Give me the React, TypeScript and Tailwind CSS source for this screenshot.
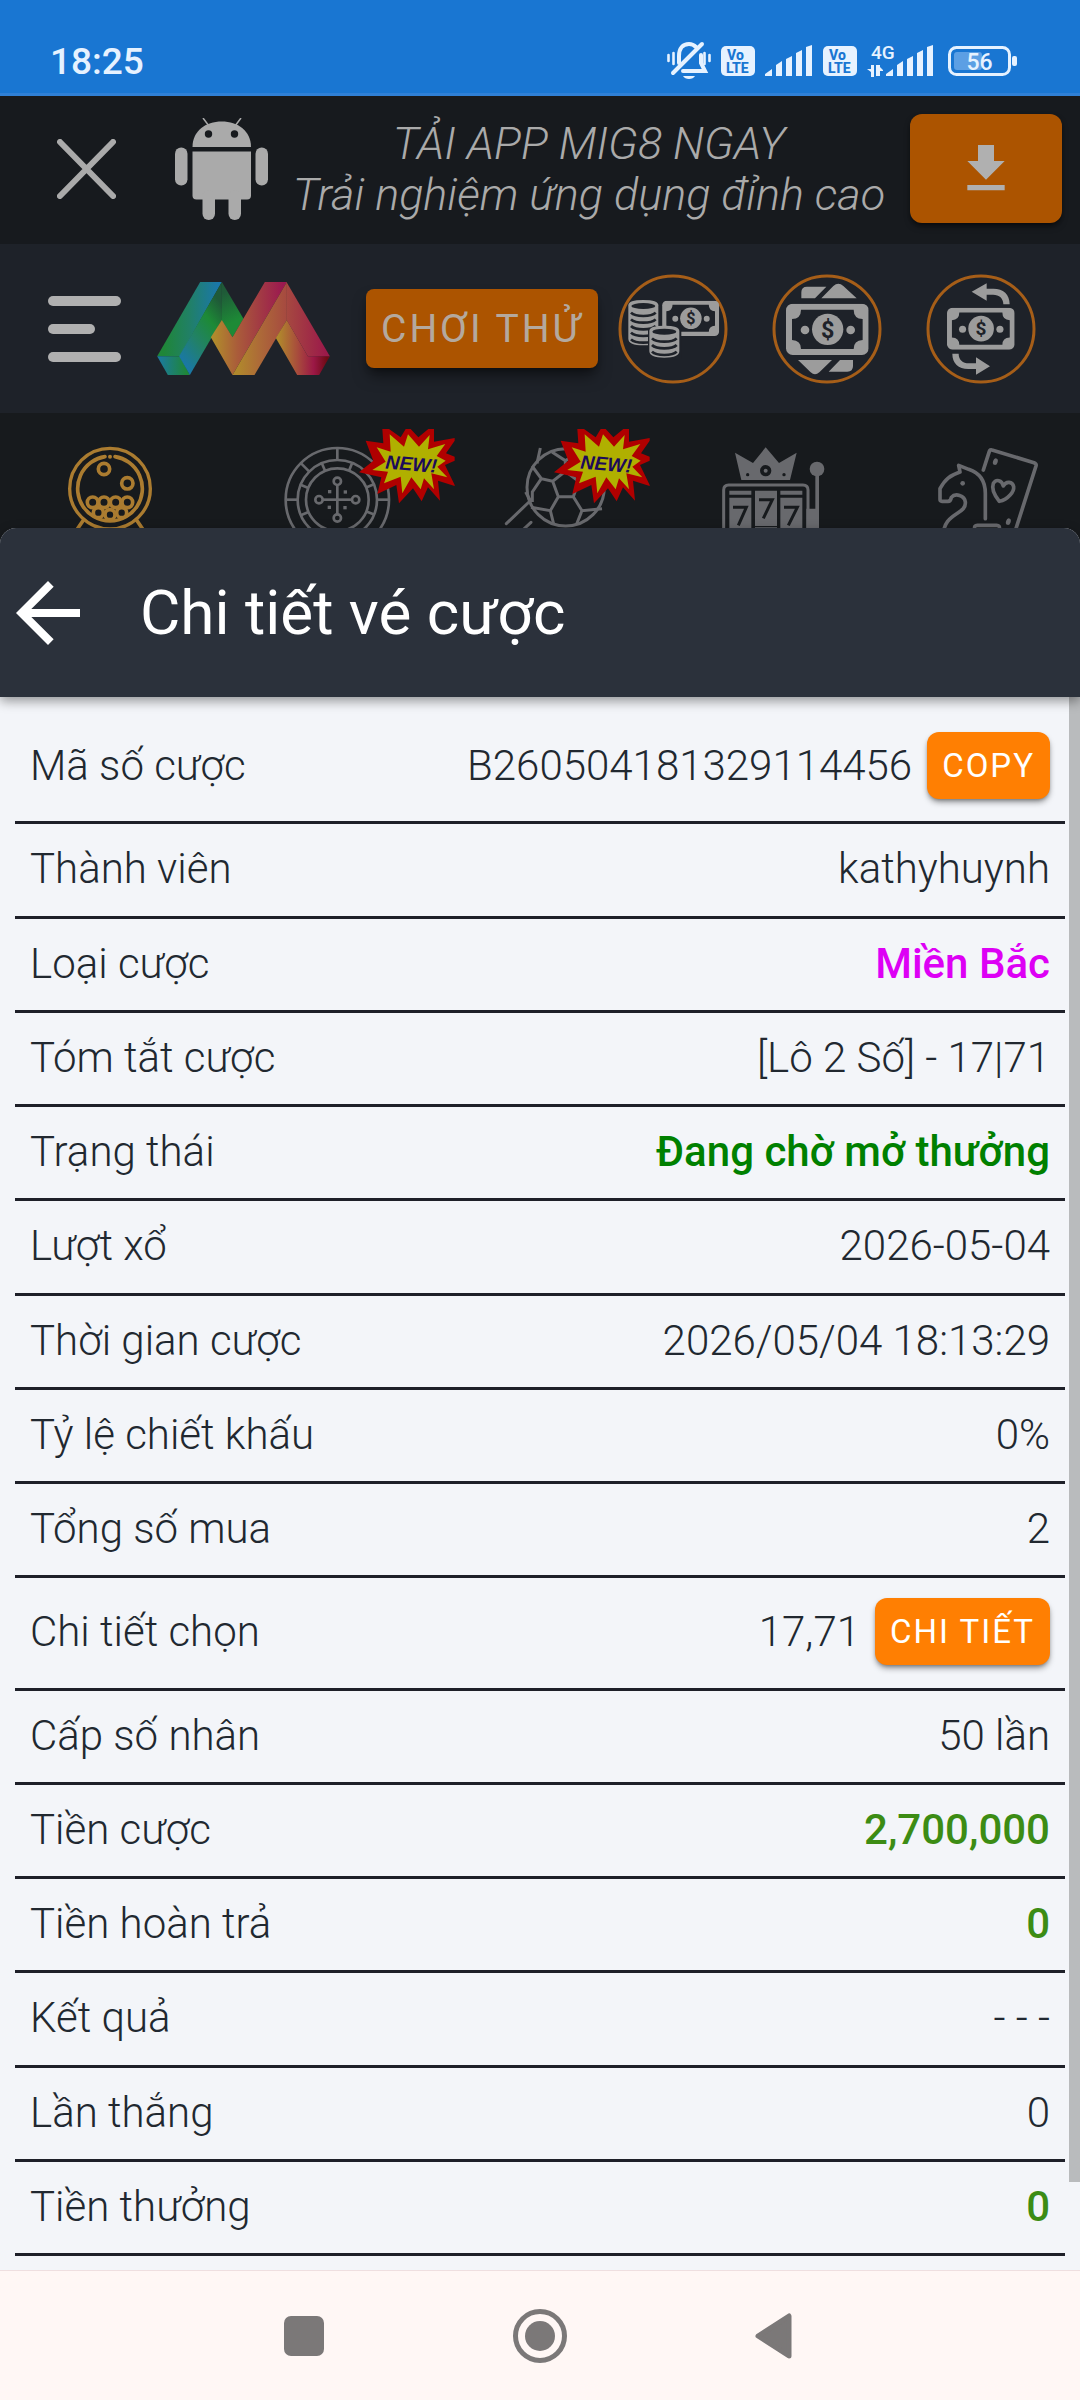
import type { ReactNode } from "react";
import clsx from "clsx";
import { MdArrowBack } from "react-icons/md";

type Tone = "default" | "magenta" | "green" | "lime";

type DetailRow = {
  label: string;
  value: string;
  tone?: Tone;
  action?: string;
};

const TICKET_ROWS: DetailRow[] = [
  { label: "Mã số cược", value: "B260504181329114456", action: "COPY" },
  { label: "Thành viên", value: "kathyhuynh" },
  { label: "Loại cược", value: "Miền Bắc", tone: "magenta" },
  { label: "Tóm tắt cược", value: "[Lô 2 Số] - 17|71" },
  { label: "Trạng thái", value: "Đang chờ mở thưởng", tone: "green" },
  { label: "Lượt xổ", value: "2026-05-04" },
  { label: "Thời gian cược", value: "2026/05/04 18:13:29" },
  { label: "Tỷ lệ chiết khấu", value: "0%" },
  { label: "Tổng số mua", value: "2" },
  { label: "Chi tiết chọn", value: "17,71", action: "CHI TIẾT" },
  { label: "Cấp số nhân", value: "50 lần" },
  { label: "Tiền cược", value: "2,700,000", tone: "lime" },
  { label: "Tiền hoàn trả", value: "0", tone: "lime" },
  { label: "Kết quả", value: "- - -" },
  { label: "Lần thắng", value: "0" },
  { label: "Tiền thưởng", value: "0", tone: "lime" },
];

const toneClass: Record<Tone, string> = {
  default: "",
  magenta: "font-medium text-[#dd00f5]",
  green: "font-medium text-[#008000]",
  lime: "font-medium text-[#3c8c14]",
};

export default function App() {
  return (
    <div className="flex min-h-screen flex-col bg-[#171a1e] font-['Roboto',sans-serif]">
      <StatusBar />
      <PromoBar />
      <SiteHeader />
      <CategoryStrip />
      <TicketSheet />
      <SystemNav />
    </div>
  );
}

/* ---------- status bar ---------- */

function StatusBar() {
  return (
    <div className="flex h-24 items-end justify-between border-b-3 border-[#2f80d6] bg-[#1976d2] pr-[63px] pb-3 pl-[50px] text-[#e6f2ff]">
      <span className="text-[37px] leading-[38px] font-medium">18:25</span>
      <div className="flex items-center gap-[10px]">
        <MutedBell />
        <VolteBadge />
        <svg viewBox="0 0 48 40" className="h-10 w-12" fill="currentColor">
          <SignalBars />
        </svg>
        <VolteBadge />
        <svg viewBox="0 0 67 40" className="h-10 w-[67px]" fill="currentColor">
          <text x="4" y="18" fontSize="19" fontWeight="500">
            4G
          </text>
          <path d="M4 24h3v12h-3v-5l-4-3h4zM9 24h4v11h-4zM11 24l5 5v1h-5z" />
          <g transform="translate(19 0)">
            <SignalBars />
          </g>
        </svg>
        <svg viewBox="0 0 69 40" className="ml-1 h-10 w-[69px]" fill="none">
          <rect x="1.5" y="6.5" width="60" height="27" rx="7" stroke="currentColor" strokeWidth="3" />
          <rect x="6" y="11" width="28" height="18" rx="3" fill="#5c9fe4" />
          <rect x="64" y="15" width="5" height="10" rx="2" fill="currentColor" />
          <text x="31.5" y="28.5" textAnchor="middle" fontSize="23" fontWeight="500" fill="currentColor">
            56
          </text>
        </svg>
      </div>
    </div>
  );
}

function SignalBars() {
  return (
    <path d="M0 35v-2l7-5v7zM11 35v-11l6-4v15zM21 35v-17l6-3v20zM31 35v-23l6-3v26zM41 35v-29l6-2v31z" />
  );
}

function VolteBadge() {
  return (
    <svg viewBox="0 0 34 40" className="h-10 w-[34px]">
      <rect y="5" width="34" height="30" rx="5" fill="currentColor" />
      <g fill="#1976d2" fontSize="14" fontWeight="800">
        <text x="6" y="19">
          Vo
        </text>
        <text x="5" y="32">
          LTE
        </text>
      </g>
    </svg>
  );
}

function MutedBell() {
  return (
    <svg viewBox="0 0 44 40" className="h-10 w-11" fill="none" stroke="currentColor" strokeLinecap="round">
      <path d="M1.5 14v6M6.5 12v11M37.5 12v11M42.5 14v6" strokeWidth="2.6" />
      <path d="M12 22v-7c0-8 4-12 10-12 3 0 5 1 7 3M34 14v8l4 8h-22" strokeWidth="4" />
      <path d="M35 3L6 32" strokeWidth="4" />
      <path d="M16 35h12c-2 4-10 4-12 0z" fill="currentColor" stroke="none" />
    </svg>
  );
}

/* ---------- app promo ---------- */

function PromoBar() {
  return (
    <div className="flex items-center bg-[#171a1e] pt-[18px] pr-[18px] pb-[21px] pl-[57px] text-[#aaaaaa]">
      <button type="button" aria-label="Đóng" className="mr-[59px]">
        <svg viewBox="0 0 59 60" className="h-[60px] w-[59px]" stroke="currentColor" strokeWidth="6" strokeLinecap="round">
          <path d="M3 3L56 57M56 3L3 57" />
        </svg>
      </button>
      <AndroidRobot />
      <p className="flex-1 text-center text-[45px] leading-[51px] font-light italic">
        TẢI APP MIG8 NGAY
        <br />
        Trải nghiệm ứng dụng đỉnh cao
      </p>
      <button
        type="button"
        aria-label="Tải xuống"
        className="flex h-[109px] w-[152px] items-center justify-center rounded-xl bg-[#ac5400] text-[#b0b0b0] shadow-md shadow-black/50"
      >
        <svg viewBox="0 0 24 24" className="size-16" fill="currentColor">
          <path d="M19 9h-4V3H9v6H5l7 7 7-7zM5 18v2h14v-2H5z" />
        </svg>
      </button>
    </div>
  );
}

function AndroidRobot() {
  return (
    <svg viewBox="175 118 93 102" className="h-[102px] w-[93px]" fill="currentColor">
      <path d="M192.5 147c0-16 13-25.5 29.25-25.5s29.25 9.5 29.25 25.5z" />
      <path d="M203 118l6 8M241 118l-6 8" stroke="currentColor" strokeWidth="1.5" />
      <circle cx="208.5" cy="134" r="3.7" fill="#171a1e" />
      <circle cx="234.5" cy="134" r="3.7" fill="#171a1e" />
      <path d="M192.5 151.5h58.5v44a4 4 0 0 1-4 4h-50.5a4 4 0 0 1-4-4z" />
      <rect x="175" y="147.5" width="12.5" height="38" rx="6.2" />
      <rect x="255.5" y="147.5" width="12.5" height="38" rx="6.2" />
      <rect x="202.5" y="190" width="12.5" height="30" rx="6.2" />
      <rect x="228.5" y="190" width="12.5" height="30" rx="6.2" />
    </svg>
  );
}

/* ---------- site header ---------- */

function SiteHeader() {
  return (
    <header className="flex h-[169px] items-center gap-9 bg-[#1e2229] pr-[45px] pl-12 text-[#9c9c9c]">
      <button type="button" aria-label="Menu" className="flex shrink-0 flex-col gap-[18px]">
        <span className="h-[10px] w-[73px] rounded-full bg-[#b0b0b0]" />
        <span className="h-[10px] w-[47px] rounded-full bg-[#b0b0b0]" />
        <span className="h-[10px] w-[73px] rounded-full bg-[#b0b0b0]" />
      </button>
      <Logo />
      <button
        type="button"
        className="h-[79px] shrink-0 rounded-lg bg-[#ac5400] px-[15px] text-[39px] leading-[48px] tracking-[3px] whitespace-nowrap text-[#b4a99e] shadow-lg shadow-black/50"
      >
        CHƠI THỬ
      </button>
      {/* sits closer to the trial button than the regular gap */}
      <div className="-ml-4 flex flex-1 justify-end gap-11">
        <RoundAction label="Nạp tiền">
          <CoinStack x={31} y={78} rows={5} />
          <Banknote x={132} y={80} width={172} height={106} />
          <path d="M90 165h100v90h-100z" fill="#1e2229" />
          <CoinStack x={94} y={155} rows={3} />
        </RoundAction>
        <RoundAction label="Giao dịch">
          <Banknote x={42} y={89} width={248} height={154} />
          <path
            d="M88 73v-18q0-17 17-17h58l-34 35zM148 73l36-37q15-14 30 0l40 37zM78 258h102l-38 37q-13 12-26 0zM170 293l34-35h39v18q0 17-17 17z"
            fill="currentColor"
          />
        </RoundAction>
        <RoundAction label="Rút tiền">
          <Banknote x={63} y={101} width={203} height={126} />
          <path
            d="M137 53l45-25v16h20c30 0 49 17 49 47h-19c0-18-12-29-31-29h-19v18zM79 239h19c0 18 12 29 31 29h21v-18l42 27-42 25v-17h-23c-30 0-48-17-48-46z"
            fill="currentColor"
          />
        </RoundAction>
      </div>
    </header>
  );
}

function Logo() {
  return (
    <svg viewBox="472 126 518 279" className="h-[93px] w-[173px] shrink-0" role="img" aria-label="MIG8">
      <defs>
        <linearGradient id="teal" x1="0" x2="1">
          <stop offset="0.1" stopColor="#1f8638" />
          <stop offset="0.5" stopColor="#218066" />
          <stop offset="0.95" stopColor="#1a77ab" />
        </linearGradient>
        <linearGradient id="foot" x1="0" x2="1">
          <stop offset="0.05" stopColor="#1b7a9e" />
          <stop offset="0.9" stopColor="#1f8638" />
        </linearGradient>
        <linearGradient id="leaf" x1="0" y1="1" x2="0.6" y2="0">
          <stop offset="0.15" stopColor="#1a78a4" />
          <stop offset="0.45" stopColor="#228168" />
          <stop offset="0.75" stopColor="#1d8a36" />
          <stop offset="1" stopColor="#1f5a38" />
        </linearGradient>
        <linearGradient id="leafEdge" x1="0" y1="0" x2="0.2" y2="1">
          <stop offset="0.2" stopColor="#1f5a38" />
          <stop offset="0.8" stopColor="#1d8a36" />
        </linearGradient>
        <linearGradient id="flame" x1="0" x2="1">
          <stop offset="0.05" stopColor="#b08a2c" />
          <stop offset="0.35" stopColor="#aa5c3a" />
          <stop offset="0.65" stopColor="#a23a44" />
          <stop offset="0.95" stopColor="#9b1850" />
        </linearGradient>
        <linearGradient id="gold" x1="0" x2="1">
          <stop offset="0.1" stopColor="#b0882c" />
          <stop offset="0.5" stopColor="#ad6a38" />
          <stop offset="1" stopColor="#a64940" />
        </linearGradient>
        <linearGradient id="rose" x1="0" x2="1">
          <stop offset="0" stopColor="#a64940" />
          <stop offset="0.9" stopColor="#9b1a4a" />
        </linearGradient>
        <linearGradient id="tail" x1="0" x2="1">
          <stop offset="0.05" stopColor="#b0882c" />
          <stop offset="0.4" stopColor="#a84c3c" />
          <stop offset="0.7" stopColor="#9b1846" />
          <stop offset="0.95" stopColor="#6e0a14" />
        </linearGradient>
      </defs>
      <polygon points="601,126 666,126 540,349 472,349" fill="url(#teal)" />
      <polygon points="472,349 540,349 570,405 504,405" fill="url(#foot)" />
      <polygon points="666,126 666,240 570,405 538,349" fill="url(#leaf)" />
      <polygon points="666,126 731,236 698,292 665,241" fill="url(#leafEdge)" />
      <polygon points="633,292 666,240 698,292 795,126 861,126 698,405" fill="url(#flame)" />
      <polygon points="861,126 861,240 764,405 698,405" fill="url(#gold)" />
      <polygon points="861,240 924,349 990,349 958,405 892,405 828,294" fill="url(#tail)" />
      <polygon points="860,126 990,349 924,349 860,239" fill="url(#rose)" />
    </svg>
  );
}

function RoundAction({ label, children }: { label: string; children: ReactNode }) {
  return (
    <button type="button" aria-label={label} className="size-[110px] shrink-0">
      <svg viewBox="0 0 330 330" className="size-full">
        <circle cx="165" cy="165" r="159" fill="none" stroke="#a65e18" strokeWidth="9" />
        {children}
      </svg>
    </button>
  );
}

function Banknote({ x, y, width, height }: { x: number; y: number; width: number; height: number }) {
  return (
    <svg x={x} y={y} width={width} height={height} viewBox="0 0 248 154">
      <rect width="248" height="154" rx="20" fill="currentColor" />
      <path d="M45 18h158q0 27 27 28v63q-27 1-27 27h-158q0-26-27-27v-63q27-1 27-28z" fill="#1e2229" />
      <circle cx="125" cy="77" r="47" fill="currentColor" />
      <circle cx="57" cy="79" r="13" fill="currentColor" />
      <circle cx="194" cy="79" r="13" fill="currentColor" />
      <text x="125" y="102" textAnchor="middle" fontSize="70" fontWeight="700" fill="#1e2229">
        $
      </text>
    </svg>
  );
}

function CoinStack({ x, y, rows }: { x: number; y: number; rows: number }) {
  const side = rows * 20;
  return (
    <g transform={`translate(${x} ${y})`}>
      <path d={`M0 16q0-16 45-16t45 16v${side}q0 20-45 20t-45-20z`} fill="currentColor" />
      <ellipse cx="45" cy="18" rx="36" ry="9" fill="#1e2229" />
      {Array.from({ length: rows }, (_, i) => (
        <path
          key={i}
          d={`M8 ${38 + i * 20}q10 10 37 10t37-10`}
          fill="none"
          stroke="#1e2229"
          strokeWidth="8"
        />
      ))}
    </g>
  );
}

/* ---------- game categories ---------- */

function CategoryStrip() {
  return (
    <nav className="-mb-4 flex justify-between bg-[#171a1d] pt-[14px] pr-[26px] pb-4 pl-11 text-[#68696d]">
      <Category label="Xổ số" viewBox="132 561 396 303" highlighted>
        <circle cx="330" cy="746" r="121" strokeWidth="10" />
        <path d="M315 650a97 97 0 1 0 30 0" strokeWidth="11" strokeLinecap="round" />
        <circle cx="330" cy="650" r="6" fill="currentColor" stroke="none" />
        <g strokeWidth="11">
          <circle cx="312" cy="687" r="17" />
          <circle cx="382" cy="730" r="17" />
          <circle cx="278" cy="787" r="16" />
          <circle cx="312" cy="787" r="16" />
          <circle cx="347" cy="787" r="16" />
          <circle cx="382" cy="787" r="16" />
          <circle cx="295" cy="818" r="15" />
          <circle cx="330" cy="824" r="15" />
          <circle cx="365" cy="818" r="15" />
          <path d="M252 838l-22 32M408 838l22 32" />
        </g>
      </Category>
      <Category label="Casino" viewBox="790 561 396 303" badge={<NewBurst className="left-[72%]" />}>
        <g transform="translate(1010 779)" strokeWidth="8">
          <circle r="155" />
          <circle r="119" />
          <circle r="94" />
          {[0, 45, 90, 135, 180, 225, 270, 315].map((deg) => (
            <path key={deg} d="M0-119v-36" transform={`rotate(${deg})`} />
          ))}
          {[22, 67, 112, 157, 202, 247, 292, 337].map((deg) => (
            <path key={deg} d="M0-94v-25" transform={`rotate(${deg})`} />
          ))}
          {[0, 90, 180, 270].map((deg) => (
            <g key={deg} transform={`rotate(${deg})`}>
              <path d="M0 0v-44" />
              <circle cy="-55" r="11" />
              <rect x="19" y="-28" width="10" height="10" fill="currentColor" stroke="none" />
            </g>
          ))}
        </g>
      </Category>
      <Category label="Thể thao" viewBox="399 561 396 303" badge={<NewBurst className="left-[54%]" />}>
        <g strokeWidth="9">
          <circle cx="647" cy="742" r="116" />
          <path d="M625 770l-17-46 38-30 40 30-16 46zM608 724l-34-8-28-38M574 716l-27 40 0 30M625 770l-24 42-58-10M601 812l10 40M670 770l26 42 60-6M696 812l-16 40M646 694v-32l-40-26M646 662l40-26M543 786l-16-30M561 670l10-46" />
          <path d="M537 786l-68 65M543 847l-30 28" strokeLinecap="round" />
        </g>
      </Category>
      <Category label="Nổ hũ" viewBox="-22 561 396 303">
        <path
          d="M74 638l54 31 38-47 40 47 53-31-20 82h-146z"
          fill="currentColor"
          stroke="none"
        />
        <g fill="#171a1d" stroke="none">
          <circle cx="166" cy="692" r="17" />
          <circle cx="112" cy="704" r="5" />
          <circle cx="221" cy="704" r="5" />
        </g>
        <circle cx="166" cy="692" r="6" fill="currentColor" stroke="none" />
        <path d="M40 870v-120q0-15 15-15h223q15 0 15 15v120" strokeWidth="9" />
        <g fill="currentColor" stroke="none">
          <path d="M57 752h66v12h-66zM210 752h66v12h-66zM57 773h66v100h-66zM134 752h66v106h-66zM134 862h66v10h-66zM210 773h66v100h-66z" />
          <path d="M288 806h27v-110h11v180h-38z" />
          <circle cx="320" cy="687" r="22" />
        </g>
        <g fill="none" stroke="#171a1d" strokeWidth="9">
          <path d="M68 802h40l-24 54M146 779h40l-27 56M221 802h40l-27 54" />
        </g>
      </Category>
      <Category label="Game bài" viewBox="636 561 396 303">
        <g strokeWidth="11" strokeLinecap="round" strokeLinejoin="round">
          <path d="M820 690l18-56q2-6 8-4l126 38q8 3 6 10l-64 200" />
          <path d="M826 836v-76c0-40-20-62-50-72l-30-12 4 20c-30 10-45 22-60 50v32q0 6 6 6h18q8 0 10-12c12-14 40-6 42 14 4 40-68 30-66 104" />
          <path d="M868 784c-16-20-24-38-18-54 8-14 26-10 30 8 8-16 28-14 31 2 2 14-16 38-43 44z" />
          <path d="M794 866q-2-10 8-10h58q10 0 8 10" />
        </g>
        <g fill="currentColor" stroke="none">
          <circle cx="758" cy="730" r="7" />
          <ellipse cx="856" cy="665" rx="7" ry="10" transform="rotate(18 856 665)" />
          <ellipse cx="895" cy="845" rx="7" ry="10" transform="rotate(18 895 845)" />
        </g>
      </Category>
    </nav>
  );
}

type CategoryProps = {
  label: string;
  viewBox: string;
  highlighted?: boolean;
  badge?: ReactNode;
  children: ReactNode;
};

function Category({ label, viewBox, highlighted, badge, children }: CategoryProps) {
  return (
    <a href="#" aria-label={label} className={clsx("relative", highlighted && "text-[#ab7c30]")}>
      <svg viewBox={viewBox} className="h-[101px] w-[132px]" fill="none" stroke="currentColor">
        {children}
      </svg>
      {badge}
    </a>
  );
}

function NewBurst({ className }: { className: string }) {
  return (
    <svg viewBox="25 567 288 225" className={clsx("absolute top-[2px] h-[75px] w-24", className)}>
      <path
        d="M95 567h20l35 25 15-25h15l23 25 30-25h17v38l62-11v8l-26 38 26 10v12l-29 13 29 60v3l-50-16 6 60-36-40-19 42-26-39-42 45-8-55-57 27 12-50-67-15 43-35-23-60 53 8z"
        fill="#b00000"
      />
      <path
        d="M117 583l43 37 12-37 33 37 32-35-5 43 52-16-26 36 27 14-25 18 30 32-48-12 8 48-30-33-10 33-28-36-27 48-5-50-50 20 12-35-47-5 40-25-27-43 42 13z"
        fill="#b0b000"
      />
      <text
        x="182"
        y="692"
        textAnchor="middle"
        fontFamily="Liberation Sans, sans-serif"
        fontSize="58"
        fontWeight="700"
        fontStyle="italic"
        fill="#1c0a5a"
        transform="rotate(5 182 672)"
      >
        NEW!
      </text>
    </svg>
  );
}

/* ---------- ticket detail sheet ---------- */

function TicketSheet() {
  return (
    <section className="relative flex flex-1 flex-col rounded-t-2xl bg-[#f3f5f9]">
      <div className="relative z-10 flex h-[169px] items-center rounded-t-2xl bg-[#2b313b] text-white shadow-[0_4px_12px_rgba(0,0,0,0.4)]">
        <button type="button" aria-label="Quay lại" className="mr-11">
          <MdArrowBack className="size-24" />
        </button>
        <h1 className="text-[62px] leading-[72px]">Chi tiết vé cược</h1>
      </div>
      <div className="relative flex flex-1 flex-col px-[15px] pt-[15px] pb-[14px]">
        <dl className="flex flex-1 flex-col">
          {TICKET_ROWS.map((row) => (
            <TicketRow key={row.label} row={row} />
          ))}
        </dl>
        <div className="absolute top-0 right-0 bottom-[88px] w-[11px] bg-[#b9bbbd]" />
      </div>
    </section>
  );
}

function TicketRow({ row }: { row: DetailRow }) {
  return (
    <div className="flex grow items-center justify-between border-b-3 border-[#1e2029] px-[15px] pt-5 pb-[22px] text-[42px] leading-[49px] font-light text-[#212830]">
      <dt>{row.label}</dt>
      <dd className={clsx("flex items-center gap-[15px]", toneClass[row.tone ?? "default"])}>
        {row.value}
        {row.action && (
          <button
            type="button"
            className="h-[67px] rounded-xl bg-[#ff7f02] px-[15px] text-[33px] leading-[40px] font-normal tracking-[2px] text-white shadow-md shadow-black/40"
          >
            {row.action}
          </button>
        )}
      </dd>
    </div>
  );
}

/* ---------- android navigation ---------- */

function SystemNav() {
  return (
    <div className="flex h-[130px] justify-center border-t border-[#efdfe0] bg-[#fff7f5] text-[#7b7878]">
      <NavButton label="Ứng dụng gần đây">
        <rect x="10" y="10" width="40" height="40" rx="7" fill="currentColor" />
      </NavButton>
      <NavButton label="Màn hình chính">
        <circle cx="30" cy="30" r="24.5" fill="none" stroke="currentColor" strokeWidth="5" />
        <circle cx="30" cy="30" r="15" fill="currentColor" />
      </NavButton>
      <NavButton label="Trở về">
        <path d="M12 30l31-20v40z" fill="currentColor" stroke="currentColor" strokeWidth="5" strokeLinejoin="round" />
      </NavButton>
    </div>
  );
}

function NavButton({ label, children }: { label: string; children: ReactNode }) {
  return (
    <button type="button" aria-label={label} className="flex w-[236px] items-center justify-center">
      <svg viewBox="0 0 60 60" className="size-[60px]">
        {children}
      </svg>
    </button>
  );
}
